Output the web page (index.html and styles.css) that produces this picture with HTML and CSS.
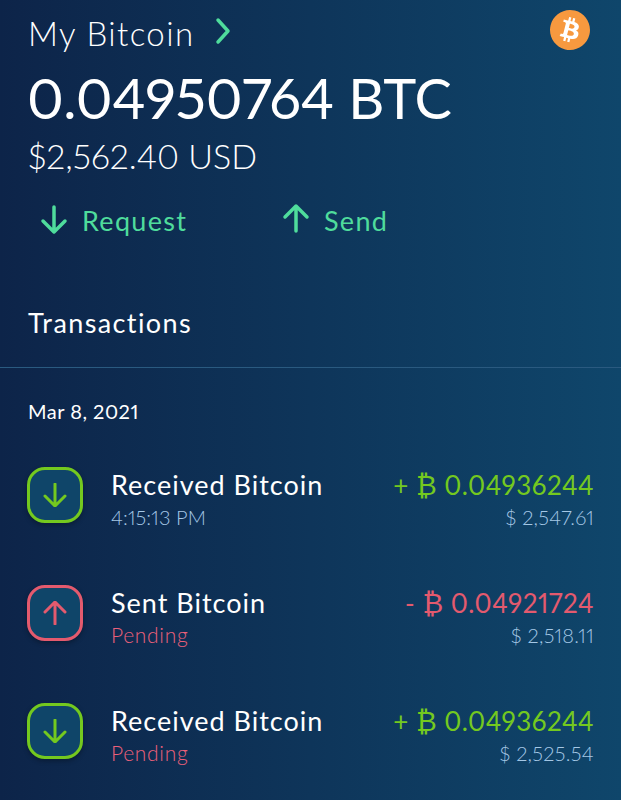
FILE: index.html
```html
<!DOCTYPE html>
<html lang="en">
<head>
    <meta charset="UTF-8">
    <title>My Bitcoin</title>
    <link rel="stylesheet" href="styles.css">
</head>
<body>
<div class="wallet">
    <div class="title-row">
        <span class="title">My Bitcoin</span>
        <svg class="chevron" viewBox="0 0 16 28"><path d="M3 3l10 11L3 25"/></svg>
        <svg class="coin" viewBox="0 0 24 24">
            <circle cx="12" cy="12" r="11" fill="#fff"/>
            <path fill="#f7993f" d="M23.638 14.904c-1.602 6.43-8.113 10.34-14.542 8.736C2.67 22.05-1.244 15.525.362 9.105 1.962 2.67 8.475-1.243 14.9.358c6.43 1.605 10.342 8.115 8.738 14.548v-.002zm-6.35-4.613c.24-1.59-.974-2.45-2.64-3.03l.54-2.153-1.315-.33-.525 2.107c-.345-.087-.705-.167-1.064-.25l.526-2.127-1.32-.33-.54 2.165c-.285-.067-.565-.132-.84-.2l-1.815-.45-.35 1.407s.975.225.955.236c.535.136.63.486.615.766l-1.477 5.92c-.075.166-.24.406-.614.314.015.02-.96-.24-.96-.24l-.66 1.51 1.71.426.93.242-.54 2.19 1.32.327.54-2.17c.36.1.705.19 1.05.273l-.51 2.154 1.32.33.545-2.19c2.24.427 3.93.257 4.64-1.774.57-1.637-.03-2.58-1.217-3.196.854-.193 1.5-.76 1.68-1.93h.01zm-3.01 4.22c-.404 1.64-3.157.75-4.05.53l.72-2.9c.896.23 3.757.67 3.33 2.37zm.41-4.24c-.37 1.49-2.662.735-3.405.55l.654-2.64c.744.18 3.137.524 2.75 2.084v.006z"/>
        </svg>
    </div>
    <div class="btc-balance">0.04950764 BTC</div>
    <div class="usd-balance">$2,562.40 USD</div>
    <div class="actions">
        <a class="action action-request">
            <svg class="action-icon" viewBox="0 0 28 32"><path d="M14 3v25M3 17l11 11 11-11"/></svg>
            Request
        </a>
        <a class="action action-send">
            <svg class="action-icon icon-up" viewBox="0 0 28 32"><path d="M14 29V4M3 15L14 4l11 11"/></svg>
            Send
        </a>
    </div>
    <div class="section-title">Transactions</div>
</div>
<div class="divider"></div>
<div class="list">
    <div class="date">Mar 8, 2021</div>

    <div class="tx tx-in">
        <div class="tx-icon"><svg viewBox="0 0 24 24"><path d="M12 1v22M2 13l10 10 10-10"/></svg></div>
        <div class="tx-info">
            <div class="tx-name">Received Bitcoin</div>
            <div class="tx-sub">4:15:13 PM</div>
        </div>
        <div class="tx-amounts">
            <div class="tx-btc">+ <span class="sign">₿</span> 0.04936244</div>
            <div class="tx-usd">$ 2,547.61</div>
        </div>
    </div>

    <div class="tx tx-out">
        <div class="tx-icon"><svg viewBox="0 0 24 24"><path d="M12 23V1M2 11L12 1l10 10"/></svg></div>
        <div class="tx-info">
            <div class="tx-name">Sent Bitcoin</div>
            <div class="tx-sub pending">Pending</div>
        </div>
        <div class="tx-amounts">
            <div class="tx-btc">- <span class="sign">₿</span> 0.04921724</div>
            <div class="tx-usd">$ 2,518.11</div>
        </div>
    </div>

    <div class="tx tx-in">
        <div class="tx-icon"><svg viewBox="0 0 24 24"><path d="M12 1v22M2 13l10 10 10-10"/></svg></div>
        <div class="tx-info">
            <div class="tx-name">Received Bitcoin</div>
            <div class="tx-sub pending">Pending</div>
        </div>
        <div class="tx-amounts">
            <div class="tx-btc">+ <span class="sign">₿</span> 0.04936244</div>
            <div class="tx-usd">$ 2,525.54</div>
        </div>
    </div>
</div>
</body>
</html>
```

FILE: styles.css
```css
html, body {
    margin: 0;
    height: 100%;
}

body {
    background: linear-gradient(90deg, #0d2449, #0f466b);
    color: #fff;
    font-family: Lato, "Noto Sans", sans-serif;
    font-weight: 300;
    font-variant-numeric: proportional-nums;
    overflow: hidden;
}

svg {
    display: block;
    fill: none;
    stroke-linecap: round;
    stroke-linejoin: round;
}

.wallet {
    padding: 10px 31px 0 28px;
}

.title-row {
    display: flex;
    align-items: center;
    height: 40px;
}

.title {
    padding-top: 6px;
    font-size: 33px;
    line-height: 48px;
    letter-spacing: 1.4px;
}

.chevron {
    width: 16px;
    height: 28px;
    margin: 2px 0 0 21px;
    stroke: #4fdc9c;
    stroke-width: 3.5;
}

.coin {
    width: 40px;
    height: 40px;
    margin-left: auto;
}

.btc-balance {
    margin: 14px 0 0 -1px;
    font-size: 56px;
    line-height: 68px;
    font-weight: 400;
    letter-spacing: -0.2px;
}

.usd-balance {
    margin-top: 3px;
    font-size: 34px;
    line-height: 42px;
}

.actions {
    display: flex;
    margin: 25px 0 0 12px;
    height: 36px;
}

.action {
    display: flex;
    align-items: center;
    gap: 14px;
    color: #4fdc9c;
    font-size: 27px;
    font-weight: 400;
    letter-spacing: 1.3px;
}

.action-request {
    width: 242px;
}

.action-icon {
    width: 28px;
    height: 32px;
    stroke: #4fdc9c;
    stroke-width: 3.5;
}

.icon-up {
    margin-top: -4px;
}

.section-title {
    margin-top: 67px;
    font-size: 27px;
    line-height: 36px;
    font-weight: 400;
    letter-spacing: 1.4px;
}

.divider {
    height: 1px;
    margin-top: 26px;
    background: #2a5a80;
}

.list {
    padding: 0 27px;
}

.date {
    margin: 30px 0 0 1px;
    font-size: 20px;
    line-height: 26px;
    font-weight: 400;
    letter-spacing: 0.5px;
}

.tx {
    display: flex;
    align-items: center;
    height: 56px;
    margin-top: 62px;
}

.date + .tx {
    margin-top: 43px;
}

.tx-icon {
    box-sizing: border-box;
    display: flex;
    align-items: center;
    justify-content: center;
    width: 56px;
    height: 56px;
    border: 3px solid;
    border-radius: 18px;
    background: #0f4569;
    box-shadow: 0 2px 5px rgba(0, 0, 0, 0.3);
}

.tx-icon svg {
    width: 24px;
    height: 24px;
    stroke: currentColor;
    stroke-width: 3;
}

.tx-in .tx-icon, .tx-in .tx-btc {
    color: #74c91f;
}

.tx-out .tx-icon, .tx-out .tx-btc {
    color: #e45a6e;
}

.tx-info {
    margin-left: 28px;
    padding-top: 9px;
}

.tx-name {
    font-size: 27px;
    line-height: 34px;
    font-weight: 400;
    letter-spacing: 1px;
}

.tx-sub {
    margin-top: 1px;
    font-size: 20px;
    line-height: 28px;
    letter-spacing: 0.1px;
    color: #a5c8e6;
}

.tx-sub.pending {
    color: #ea607a;
    font-size: 21px;
    letter-spacing: 0.7px;
}

.tx-amounts {
    margin-left: auto;
    padding-top: 9px;
    text-align: right;
}

.tx-btc {
    font-size: 26px;
    line-height: 34px;
    font-weight: 400;
    letter-spacing: 0.5px;
}

.sign {
    font-family: "DejaVu Sans", sans-serif;
    font-size: 28px;
    line-height: 28px;
}

.tx-usd {
    margin-top: 1px;
    font-size: 20px;
    line-height: 28px;
    letter-spacing: 0.3px;
    color: #a5c8e6;
}
```
